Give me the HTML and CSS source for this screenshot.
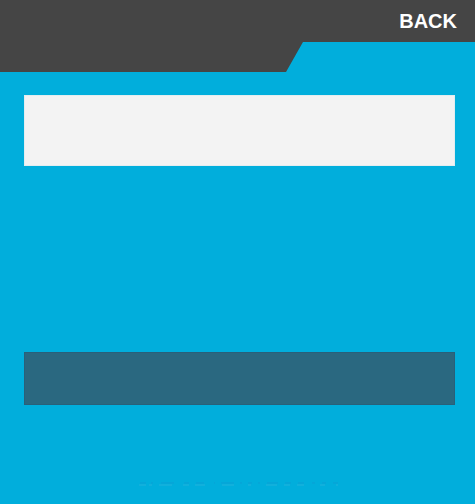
FILE: index.html
```html
<!DOCTYPE html>
<html lang="en">
<head>
<meta charset="utf-8">
<meta name="viewport" content="width=device-width, initial-scale=1">
<title>Form</title>
<link rel="stylesheet" href="styles.css">
</head>
<body>
<header class="header">
  <a class="back" href="#">BACK</a>
</header>
<main class="content">
  <input class="field" type="text" aria-label="Entry">
  <button class="submit" type="button" aria-label="Submit"></button>
  <svg class="trace" width="204" height="4" viewBox="0 0 204 4" aria-hidden="true">
    <path class="trace-dark" d="M2 1H8M13 1H15M23 1H36M46 1H51M58 1H66M76 1H77M83 1H96M102 1H104M110 1H114M120 1H122M129 1H140M147 1H153M160 1H166M174 1H177M184 1H188M195 1H200"/>
    <path class="trace-light" d="M1 3H8M11 3H14M21 3H34M45 3H51M57 3H67M84 3H96M110 3H113M128 3H139M146 3H152M159 3H166M182 3H187M198 3H200"/>
  </svg>
</main>
</body>
</html>
```

FILE: styles.css
```css
* {
  box-sizing: border-box;
}

body {
  margin: 0;
  min-height: 100vh;
  background: #01aedc;
  font-family: "Liberation Sans", Arial, sans-serif;
}

.header {
  display: flex;
  justify-content: flex-end;
  align-items: flex-start;
  height: 72px;
  padding: 9px 18px;
  background: #454545;
  clip-path: polygon(0 0, 100% 0, 100% 42px, calc(100% - 172px) 42px, calc(100% - 189px) 100%, 0 100%);
}

.back {
  color: #fff;
  font-size: 20px;
  font-weight: bold;
  line-height: 24px;
  text-decoration: none;
}

.content {
  display: flex;
  flex-direction: column;
  padding: 23px 20px 16px 24px;
}

.field,
.submit {
  width: 100%;
  margin: 0;
  border-radius: 0;
  font: inherit;
}

.field {
  height: 71px;
  padding: 0 16px;
  border: 1px solid #e2edf0;
  background: #f3f3f3;
  font-size: 20px;
}

.submit {
  height: 53px;
  margin-top: 186px;
  border: 1px solid #29607a;
  background: #2a6880;
}

.trace {
  align-self: center;
  margin-top: 77px;
  fill: none;
}

.trace-dark {
  stroke: #0a9fd4;
}

.trace-light {
  stroke: #22b2dc;
}
```
